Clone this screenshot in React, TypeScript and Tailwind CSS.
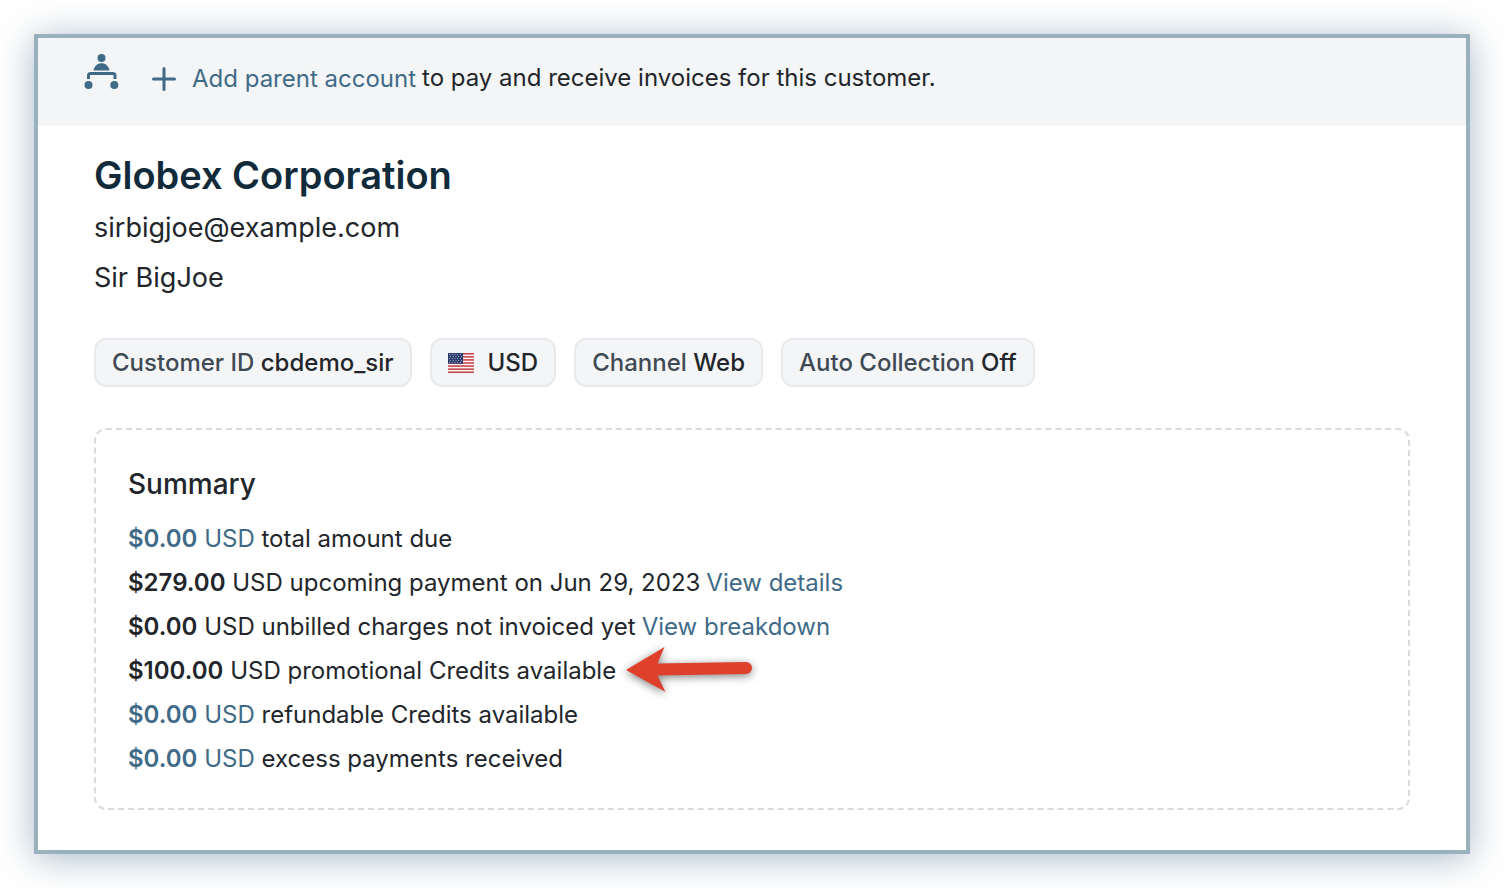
import type { ReactNode } from "react";

type SummaryRow = {
  amount: string;
  text: string;
  linked?: boolean;
  action?: string;
  highlighted?: boolean;
};

const SUMMARY_ROWS: SummaryRow[] = [
  { amount: "$0.00", text: "total amount due", linked: true },
  { amount: "$279.00", text: "upcoming payment on Jun 29, 2023", action: "View details" },
  { amount: "$0.00", text: "unbilled charges not invoiced yet", action: "View breakdown" },
  { amount: "$100.00", text: "promotional Credits available", highlighted: true },
  { amount: "$0.00", text: "refundable Credits available", linked: true },
  { amount: "$0.00", text: "excess payments received", linked: true },
];

function HierarchyIcon() {
  return (
    <svg width="36" height="38" viewBox="0 0 36 38" fill="#3f6b88" aria-hidden="true">
      <circle cx="17.5" cy="5" r="4" />
      <path d="M9.5 17.5c.8-4.6 4-7.200 8-7.200s7.200 2.600 8 7.200z" />
      <path
        d="M4.500 26v-3.500a2 2 0 0 1 2-2h22.500a2 2 0 0 1 2 2v3.500"
        fill="none"
        stroke="#3f6b88"
        strokeWidth="3"
      />
      <circle cx="4.500" cy="32" r="4" />
      <circle cx="30.300" cy="32" r="4" />
    </svg>
  );
}

function PlusIcon() {
  return (
    <svg width="24" height="24" viewBox="0 0 24 24" aria-hidden="true">
      <path d="M12 1.500v21M1.500 12h21" stroke="#3f6b88" strokeWidth="3" strokeLinecap="round" />
    </svg>
  );
}

function UsFlag() {
  const stripes = [0, 2, 4, 6, 8, 10, 12];
  const stars = [0, 1, 2, 3, 4];
  return (
    <svg width="26" height="20" viewBox="0 0 26 20" aria-hidden="true">
      <rect width="26" height="20" rx="1" fill="#fbf3f3" />
      {stripes.map((i) => (
        <rect key={i} y={(i * 20) / 13} width="26" height={20 / 13} fill="#c4434b" />
      ))}
      <rect width="15" height={(20 * 7) / 13} fill="#2f3e70" />
      {stars.map((row) =>
        stars.map((col) => (
          <circle
            key={`${row}-${col}`}
            cx={1.6 + col * 2.7 + (row % 2)}
            cy={1.4 + row * 2}
            r="0.5"
            fill="#c3c8da"
          />
        )),
      )}
    </svg>
  );
}

function RedArrow() {
  return (
    <svg
      className="absolute -top-2.5 left-full ml-2.5 overflow-visible drop-shadow-[0_2px_4px_rgba(0,0,0,0.5)]"
      width="128"
      height="46"
      viewBox="0 0 128 46"
      aria-hidden="true"
    >
      <path
        d="M0 24 38.500 1l-7 16.500 88.500-1.500a6 6 0 0 1 0 12l-88.500 1.500L39.500 46z"
        fill="#df402b"
      />
    </svg>
  );
}

function Chip({ label, children }: { label?: string; children: ReactNode }) {
  return (
    <li className="flex items-center rounded-xl border-2 border-[#e9eaed] bg-[#f4f5f7] px-4 text-2xl leading-[45px] font-medium whitespace-pre">
      {label && <span className="text-[#404a54]">{label} </span>}
      {children}
    </li>
  );
}

export default function App() {
  return (
    <div className="bg-white p-[34px] font-['Inter','Liberation_Sans',sans-serif] text-[#22262b]">
      <main className="border-4 border-[#99b1bd] bg-white shadow-[0_4px_34px_rgba(60,100,130,0.45)]">
        <div className="flex h-[88px] items-center bg-[#f4f5f7] px-[46px] pb-1.5">
          <div className="mb-3.5">
            <HierarchyIcon />
          </div>
          <p className="ml-8 flex items-center text-2xl">
            <a href="#parent" className="flex items-center gap-4 text-[#3f6b88]">
              <PlusIcon />
              Add parent account
            </a>
            <span className="ml-1.5 pb-0.5">to pay and receive invoices for this customer.</span>
          </p>
        </div>

        <div className="px-14 pt-[25px] pb-10">
          <h1 className="text-[38px] leading-12 font-semibold text-[#122b3a]">Globex Corporation</h1>
          <p className="mt-1 text-[27px] leading-[50px]">sirbigjoe@example.com</p>
          <p className="text-[27px] leading-[50px]">Sir BigJoe</p>

          <ul className="mt-[35px] flex flex-wrap items-start gap-[18px]">
            <Chip label="Customer ID">cbdemo_sir</Chip>
            <Chip>
              <UsFlag />
              <span className="ml-[14px]">USD</span>
            </Chip>
            <Chip label="Channel">Web</Chip>
            <Chip label="Auto Collection">Off</Chip>
          </ul>

          <section className="mt-[41px] rounded-xl border-2 border-dashed border-[#d9dbdf] px-8 pt-8 pb-[27px]">
            <h2 className="text-[28px] leading-11 font-medium">Summary</h2>
            <ul className="mt-[11px] text-2xl leading-11">
              {SUMMARY_ROWS.map((row) => (
                <li key={row.text}>
                  <span className="relative">
                    {row.linked ? (
                      <a href="#amount" className="text-[#3f6b88]">
                        <strong className="font-semibold">{row.amount}</strong> USD
                      </a>
                    ) : (
                      <span>
                        <strong className="font-semibold">{row.amount}</strong> USD
                      </span>
                    )}{" "}
                    {row.text}
                    {row.highlighted && <RedArrow />}
                  </span>
                  {row.action && (
                    <a href="#more" className="ml-1.5 text-[#3f6b88]">
                      {row.action}
                    </a>
                  )}
                </li>
              ))}
            </ul>
          </section>
        </div>
      </main>
    </div>
  );
}
